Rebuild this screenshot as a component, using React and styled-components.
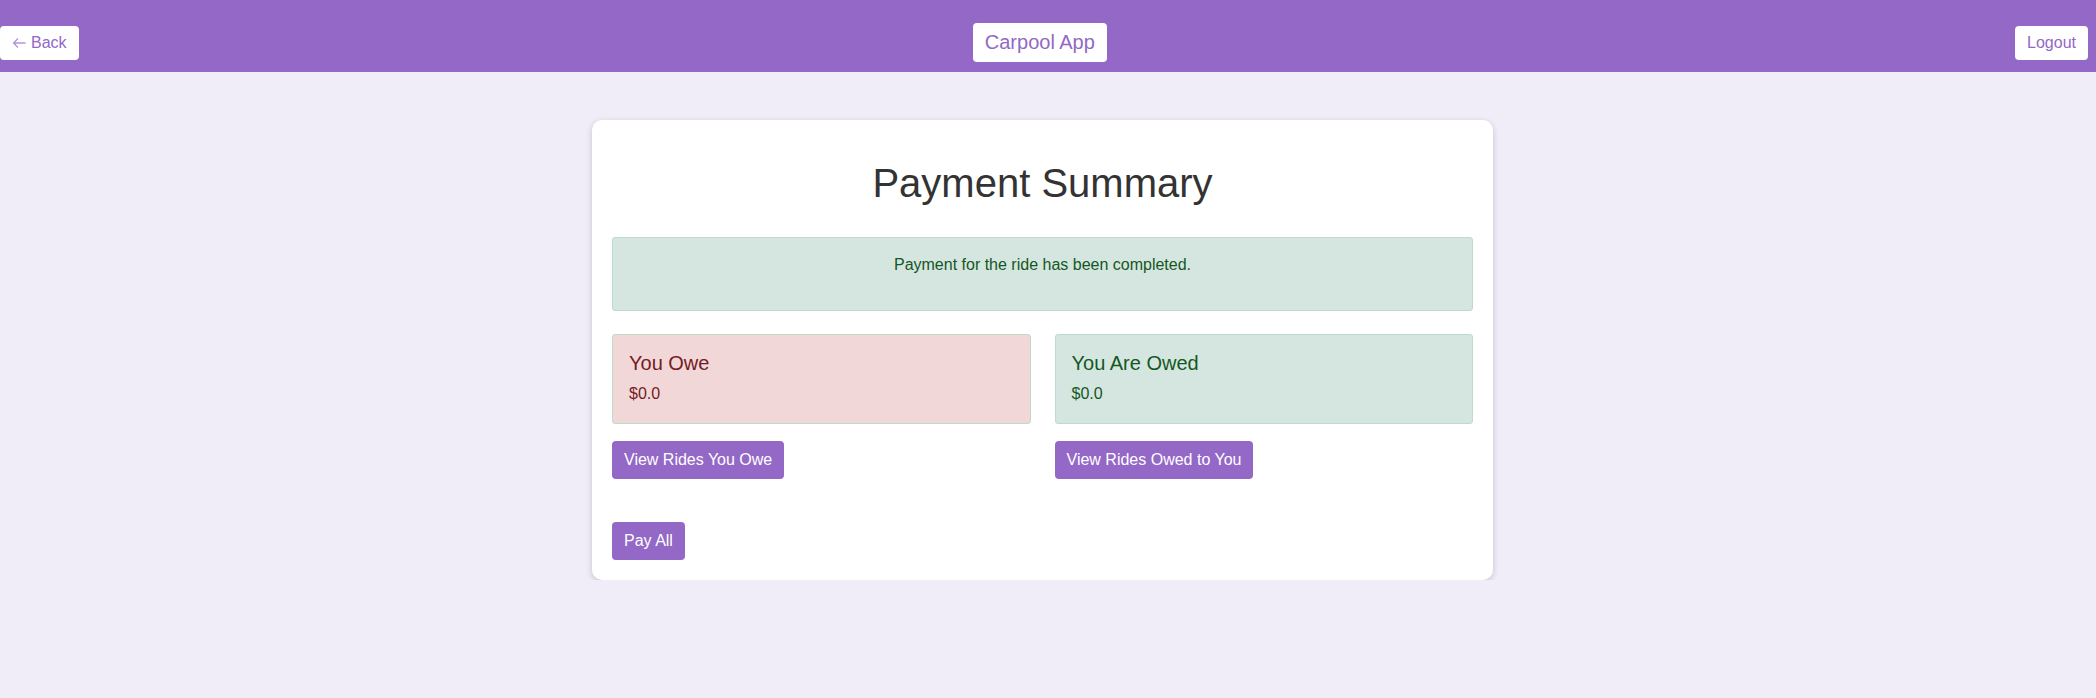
import React from 'react';
import styled, { createGlobalStyle } from 'styled-components';

const GlobalStyle = createGlobalStyle`
  * {
    box-sizing: border-box;
  }

  body {
    margin: 0;
    background: #f0edf8;
    font-family: "Liberation Sans", Arial, sans-serif;
    color: #333;
  }
`;

const Header = styled.header`
  background: #9368c6;
  height: 72px;
  padding: 23px 8px 10px 0;
  display: flex;
  justify-content: space-between;
  align-items: center;
`;

const HeaderButton = styled.button`
  background: #fff;
  color: #9368c6;
  border: none;
  border-radius: 4px;
  font-family: inherit;
  font-size: ${(p) => (p.$big ? '20px' : '16px')};
  line-height: ${(p) => (p.$big ? '23px' : '18px')};
  padding: 8px 12px;
  margin-right: ${(p) => (p.$big ? '14px' : '0')};
  display: flex;
  align-items: center;
  gap: 5px;
  cursor: pointer;
`;

const Main = styled.main`
  padding: 48px 11px 0 0;
  display: flex;
  justify-content: center;
`;

const Card = styled.section`
  width: 901px;
  background: #fff;
  border-radius: 10px;
  box-shadow: 0 2px 6px rgba(0, 0, 0, 0.18);
  padding: 20px;
`;

const Title = styled.h1`
  margin: 20px 0 31px;
  font-size: 40px;
  line-height: 46px;
  font-weight: 400;
  text-align: center;
  color: #333;
`;

const Alert = styled.div`
  background: #d4e6df;
  border: 1px solid #bcdcc8;
  border-radius: 3px;
  color: #155724;
  padding: 18px 16px 15px;
  text-align: center;

  p {
    margin: 0 0 21px;
    font-size: 16px;
    line-height: 18px;
  }
`;

const Grid = styled.div`
  margin-top: 23px;
  display: grid;
  grid-template-columns: 1fr 1fr;
  column-gap: 24px;
`;

const Column = styled.div`
  display: flex;
  flex-direction: column;
  align-items: flex-start;
`;

const Balance = styled.div`
  align-self: stretch;
  height: 90px;
  border: 1px solid #bcdcc8;
  border-radius: 3px;
  background: ${(p) => (p.$owe ? '#f2d7d8' : '#d4e6df')};
  color: ${(p) => (p.$owe ? '#721c24' : '#155724')};
  padding: 17px 16px 16px;

  h3 {
    margin: 0 0 10px;
    font-size: 20px;
    line-height: 23px;
    font-weight: 400;
  }

  p {
    margin: 0;
    font-size: 16px;
    line-height: 18px;
  }
`;

const Button = styled.button`
  background: #9368c6;
  color: #fff;
  border: none;
  border-radius: 4px;
  font-family: inherit;
  font-size: 16px;
  line-height: 18px;
  padding: 10px 12px;
  margin-top: ${(p) => p.$top || '17px'};
  cursor: pointer;
`;

const BackArrow = () => (
  <svg width="14" height="12" viewBox="0 0 14 12" fill="none" stroke="#b295da" strokeWidth="1.3">
    <path d="M13.5 6H1.5M6 1.5L1.5 6L6 10.5" />
  </svg>
);

const App = () => {
  return (
    <>
      <GlobalStyle />
      <Header>
        <HeaderButton>
          <BackArrow />
          Back
        </HeaderButton>
        <HeaderButton $big>Carpool App</HeaderButton>
        <HeaderButton>Logout</HeaderButton>
      </Header>
      <Main>
        <Card>
          <Title>Payment Summary</Title>
          <Alert>
            <p>Payment for the ride has been completed.</p>
          </Alert>
          <Grid>
            <Column>
              <Balance $owe>
                <h3>You Owe</h3>
                <p>$0.0</p>
              </Balance>
              <Button>View Rides You Owe</Button>
            </Column>
            <Column>
              <Balance>
                <h3>You Are Owed</h3>
                <p>$0.0</p>
              </Balance>
              <Button>View Rides Owed to You</Button>
            </Column>
          </Grid>
          <Button $top="43px">Pay All</Button>
        </Card>
      </Main>
    </>
  );
};

export default App;
